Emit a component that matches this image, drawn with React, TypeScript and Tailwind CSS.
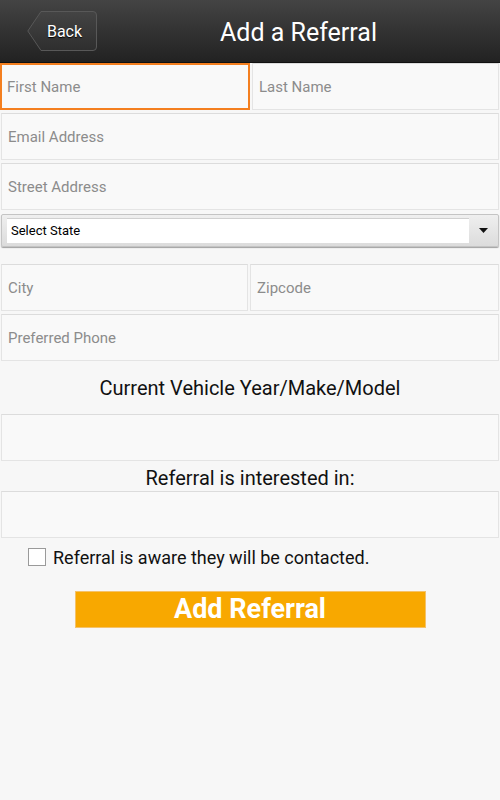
const inputBase =
  "h-[47px] border border-solid border-[#e4e4e4] border-t-[#dcdcdc] bg-[#f9f9f9] px-[6px] text-[15px] text-[#333] placeholder:text-[#8c8c8c] outline-none";

function BackButton() {
  return (
    <button className="relative w-[70px] h-[40px] flex items-center justify-center text-white text-[16px]">
      <svg className="absolute inset-0" width="70" height="40" viewBox="0 0 70 40">
        <defs>
          <linearGradient id="bk" x1="0" y1="0" x2="0" y2="1">
            <stop offset="0" stopColor="#444" />
            <stop offset="1" stopColor="#2e2e2e" />
          </linearGradient>
        </defs>
        <path
          d="M14 0.5 H66 Q69.5 0.5 69.5 4 V36 Q69.5 39.5 66 39.5 H14 L0.8 20 Z"
          fill="url(#bk)"
          stroke="#585858"
          strokeWidth="1"
        />
      </svg>
      <span className="relative pl-[5px] pt-[1px]" style={{ textShadow: "0 1px 1px #000" }}>Back</span>
    </button>
  );
}

export default function App() {
  return (
    <div className="w-[500px] min-h-[800px] bg-[#f7f7f7] font-['Roboto',sans-serif]">
      <header className="h-[63px] flex items-center pl-[27px] bg-gradient-to-b from-[#444444] to-[#222222] border-b border-[#111]">
        <BackButton />
        <h1 className="flex-1 text-center text-white text-[25px] pt-[4px]">Add a Referral</h1>
      </header>

      <div className="flex flex-col">
        <div className="flex gap-[2px] pr-[1px]">
          <input
            placeholder="First Name"
            className="h-[47px] w-[250px] border-2 border-solid border-[#f47f1f] bg-[#f9f9f9] px-[5px] text-[15px] text-[#333] placeholder:text-[#8c8c8c] outline-none"
            autoFocus
          />
          <input placeholder="Last Name" className={`${inputBase} flex-1`} />
        </div>
        <input placeholder="Email Address" className={`${inputBase} mx-[1px] mt-[3px]`} />
        <input placeholder="Street Address" className={`${inputBase} mx-[1px] mt-[3px]`} />

        <div className="mx-[1px] mt-[4px] h-[33px] flex border border-[#c4c4c4] rounded-[2px] bg-gradient-to-b from-[#efefef] to-[#dcdcdc] shadow-[0_1px_1px_rgba(0,0,0,0.35)]">
          <div className="flex-1 my-[3px] ml-[5px] bg-white flex items-center pl-[4px] text-[13px] text-black border-t border-[#d0d0d0]">
            Select State
          </div>
          <div className="w-[29px] flex items-center justify-center">
            <svg width="9" height="6" viewBox="0 0 9 6">
              <path d="M0 0 H9 L4.5 5 Z" fill="#111" />
            </svg>
          </div>
        </div>

        <div className="flex gap-[2px] mx-[1px] mt-[17px]">
          <input placeholder="City" className={`${inputBase} w-[247px]`} />
          <input placeholder="Zipcode" className={`${inputBase} flex-1`} />
        </div>
        <input placeholder="Preferred Phone" className={`${inputBase} mx-[1px] mt-[3px]`} />

        <p className="text-center text-[20px] text-[#111] h-[53px] flex items-center justify-center pt-[1px]">
          Current Vehicle Year/Make/Model
        </p>
        <input className={`${inputBase} mx-[1px]`} />

        <p className="text-center text-[20px] text-[#111] h-[30px] flex items-center justify-center pt-[3px]">
          Referral is interested in:
        </p>
        <input className={`${inputBase} mx-[1px]`} />

        <label className="flex items-center gap-[7px] pl-[28px] mt-[9px] h-[20px] text-[18px] text-[#111]">
          <span className="w-[18px] h-[18px] border border-[#9a9a9a] bg-white shrink-0" />
          Referral is aware they will be contacted.
        </label>

        <button className="self-center mt-[24px] w-[351px] h-[37px] bg-[#f8a800] border border-[#f4c26a] text-white font-bold text-[27px] leading-none">
          Add Referral
        </button>
      </div>
    </div>
  );
}
